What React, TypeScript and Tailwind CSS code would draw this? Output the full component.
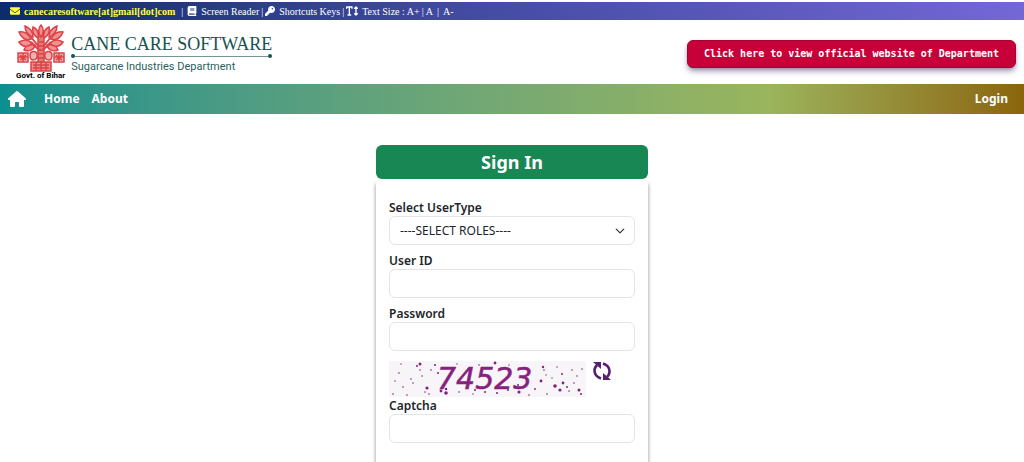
import { FormEvent, useState } from "react";
import { FaBook, FaEnvelope, FaHouse, FaKey, FaTextHeight } from "react-icons/fa6";

interface SignInForm {
  role: string,
  userId: string,
  password: string,
  captcha: string
}

// speckles behind the captcha digits: x, y, radius
const specks = [
  [10, 12, 0.8], [14, 26, 0.8], [22, 18, 0.8], [28, 5, 1], [31, 3, 1.5], [33, 15, 0.8], [24, 22, 0.8], [36, 31, 0.8],
  [38, 27, 1.6], [46, 4, 1], [42, 9, 0.8], [52, 30, 1.4], [57, 32, 1.8], [61, 7, 0.8], [70, 31, 0.8], [78, 26, 0.8],
  [86, 29, 1], [96, 31, 1], [106, 2, 1.4], [108, 32, 1], [119, 29, 1], [129, 24, 1], [130, 31, 1.6], [140, 34, 0.8],
  [152, 20, 1.4], [155, 9, 0.8], [158, 33, 0.8], [166, 25, 1.8], [171, 29, 1.6], [173, 13, 1], [174, 22, 1.4], [180, 30, 0.8],
  [183, 9, 0.8], [188, 15, 0.8], [190, 29, 1.5], [192, 33, 1], [193, 8, 0.8], [4, 33, 0.8], [18, 34, 0.8], [90, 4, 0.8],
  [57, 28, 1.3], [49, 12, 1], [154, 6, 1.2], [178, 26, 1], [12, 3, 0.7], [6, 20, 0.7], [68, 3, 0.7], [120, 4, 0.7],
  [163, 17, 0.7], [157, 14, 0.7], [185, 22, 0.8], [31, 9, 0.8], [84, 33, 0.7], [40, 33, 0.8], [168, 6, 0.7], [146, 28, 0.9],
];

function Emblem() {
  return (
    <svg viewBox="0 0 48 48" className="h-12 w-12 text-[#dc4347]" fill="none" stroke="currentColor" strokeWidth="1.5" aria-hidden="true">
      <path d="M21 12h6v26h-6z" fill="#e8787a" />
      <path d="M21 18h6M21 22h6M21 26h6M21 30h6M21 34h6" />
      <path d="M24 1c3 3 3 8 0 12c-3-4-3-9 0-12zM16 3c4 2 6 6 5 11c-4-2-6-6-5-11zM32 3c-4 2-6 6-5 11c4-2 6-6 5-11z" fill="#ee9294" />
      <path d="M8 2c5 2 8 6 8 11c-5-2-8-6-8-11zM40 2c-5 2-8 6-8 11c5-2 8-6 8-11zM2 8c6-1 10 3 12 7c-5 2-10-1-12-7zM46 8c-6-1-10 3-12 7c5 2 10-1 12-7z" fill="#ee9294" />
      <path d="M2 18c5-3 10-2 13 1c-4 5-10 4-13-1zM46 18c-5-3-10-2-13 1c4 5 10 4 13-1zM7 26c1-4 6-6 11-5c-1 5-6 7-11 5zM41 26c-1-4-6-6-11-5c1 5 6 7 11 5z" fill="#ee9294" />
      <path d="M14 13l8 10M34 13l-8 10M14 18l8 8M34 18l-8 8" strokeWidth="2" />
      <path d="M13 31c0-4 6-5 7-1s-1 6-4 6s-3-3-3-5zM35 31c0-4-6-5-7-1s1 6 4 6s3-3 3-5z" fill="#f2b0b1" />
      <path d="M1 29h10v9H1zM37 29h10v9H37z" fill="#f4b0b0" />
      <path d="M1 33h10M6 29v9M37 33h10M42 29v9M3 31l6 5M9 31l-6 5M39 31l6 5M45 31l-6 5" />
      <path d="M14 38h20v9H14z" fill="#ee8a8a" />
      <path d="M16 41h16M16 44h16M19 38v9M24 38v9M29 38v9" />
    </svg>
  );
}

function RefreshIcon() {
  return (
    <svg viewBox="0 0 20 20" className="size-5 text-[#552070]" fill="currentColor" aria-hidden="true">
      <path d="M1 1h8v7z" />
      <path d="M5 4C1 8 1.500 15 9 17.500" fill="none" stroke="currentColor" strokeWidth="2.6" />
      <path d="M19 19h-8v-7z" />
      <path d="M15 16C19 12 18.500 5 11 2.500" fill="none" stroke="currentColor" strokeWidth="2.6" />
    </svg>
  );
}

export default function App() {
  const [form, setForm] = useState<SignInForm>({
    role: '',
    userId: '',
    password: '',
    captcha: ''
  });

  function handleInput(event: { target: { name: string, value: string } }) {
    const { name, value } = event.target;
    setForm({ ...form, [name]: value })
  }

  const handleSubmit = (e: FormEvent<HTMLFormElement>) => {
    e.preventDefault();
  }

  const label = "block text-xs leading-4 font-semibold";
  const field = "block h-[29px] w-full appearance-none rounded-md border border-[#e2e5e8] bg-white px-2.5 text-xs text-[#212529]";

  return (
    <div className="flex min-h-screen flex-col bg-white font-['Noto_Sans','Open_Sans',sans-serif] text-[#212529]">
      <div className="mt-0.5 flex h-[18px] items-center gap-0.5 bg-linear-to-r from-[#0c2c6c] via-[#3d489c] via-40% to-[#7467d6] px-2.5 font-['Liberation_Serif',serif] text-[10px] text-white">
        <FaEnvelope className="mr-0.5 size-2.5 text-[#ffff3c]" />
        <a href="#mail" className="mr-1 font-bold text-[#ffff3c]">canecaresoftware[at]gmail[dot]com</a>
        <span>|</span>
        <FaBook className="mx-0.5 size-2.5" />
        <a href="#reader">Screen Reader</a>
        <span>|</span>
        <FaKey className="mr-0.5 size-2.5" />
        <a href="#keys">Shortcuts Keys</a>
        <span>|</span>
        <FaTextHeight className="mr-0.5 size-3" />
        <span>Text Size :</span>
        <button type="button">A+</button>
        <span>|</span>
        <button type="button">A</button>
        <span className="mx-0.5">|</span>
        <button type="button">A-</button>
      </div>

      <header className="flex h-16 items-center justify-between pr-2 pl-4">
        <div className="flex items-center gap-1.5">
          <div className="flex flex-col items-center font-['Roboto',sans-serif] text-[8px] leading-2 font-bold text-black">
            <Emblem />
            <span>Govt. of Bihar</span>
          </div>
          <div>
            <h1 className="pt-1.5 font-['Liberation_Serif',serif] text-lg leading-5 text-[#17524f]">CANE CARE SOFTWARE</h1>
            <div className="flex items-center text-[#17524f]">
              <span className="size-1 rounded-full bg-current"></span>
              <span className="h-px flex-1 bg-current opacity-60"></span>
              <span className="size-1 rounded-full bg-current"></span>
            </div>
            <p className="font-['Roboto',sans-serif] text-[11px] leading-[18px] text-[#2c5f5d]">Sugarcane Industries Department</p>
          </div>
        </div>
        <a href="#department" className="mt-1 rounded-md border border-[#a00534] bg-[#c70039] px-4 py-1 font-['DejaVu_Sans_Mono',monospace] text-[10px] leading-[18px] font-bold text-white shadow-md shadow-[#5a3c78]/50">
          Click here to view official website of Department
        </a>
      </header>

      <nav className="flex h-[30px] items-center gap-3 bg-linear-to-r from-[#0b8f8f] via-[#9ab55c] via-75% to-[#8b6508] pr-4 pl-2 text-xs font-bold text-white">
        <a href="#home" aria-label="Home page" className="mr-1.5"><FaHouse className="size-[18px]" /></a>
        <a href="#home">Home</a>
        <a href="#about">About</a>
        <a href="#login" className="ml-auto">Login</a>
      </nav>

      <main className="flex flex-1 justify-center pt-[31px]">
        <div className="flex w-[272px] flex-col">
          <h2 className="rounded-md bg-[#198754] py-1 text-center text-lg leading-[26px] font-bold text-white">Sign In</h2>
          <form className="flex flex-1 flex-col gap-2 px-[13px] pt-[21px] shadow-[0_5px_4px_rgba(0,0,0,0.45)]" onSubmit={handleSubmit}>
            <div>
              <label htmlFor="role" className={label}>Select UserType</label>
              <div className="relative">
                <select id="role" name="role" value={form.role} onChange={handleInput} className={field}>
                  <option value="">----SELECT ROLES----</option>
                  <option value="admin">Admin</option>
                </select>
                <svg viewBox="0 0 16 16" className="pointer-events-none absolute top-2.5 right-2.5 size-2.5" fill="none" stroke="#343a40" strokeWidth="2" strokeLinecap="round" strokeLinejoin="round">
                  <path d="M2 5l6 6 6-6" />
                </svg>
              </div>
            </div>
            <div>
              <label htmlFor="userId" className={label}>User ID</label>
              <input type="text" id="userId" name="userId" value={form.userId} onChange={handleInput} className={field} />
            </div>
            <div>
              <label htmlFor="password" className={label}>Password</label>
              <input type="password" id="password" name="password" value={form.password} onChange={handleInput} className={field} />
            </div>
            <div>
              <div className="flex items-start gap-1.5 pt-0.5 pb-px">
                <svg viewBox="0 0 197 36" className="h-9 w-[197px] overflow-visible bg-[#f7f5f8]" fill="#86217f">
                  {specks.map(([x, y, r]) => <circle key={`${x}-${y}`} cx={x} cy={y} r={r} />)}
                  <text x="48" y="28" className="font-['DejaVu_Sans',sans-serif] text-[30px] italic" stroke="#86217f" strokeWidth="0.5">74523</text>
                </svg>
                <button type="button" aria-label="Refresh captcha"><RefreshIcon /></button>
              </div>
              <label htmlFor="captcha" className={label}>Captcha</label>
              <input type="text" id="captcha" name="captcha" value={form.captcha} onChange={handleInput} className={field} />
            </div>
          </form>
        </div>
      </main>
    </div>
  );
}
